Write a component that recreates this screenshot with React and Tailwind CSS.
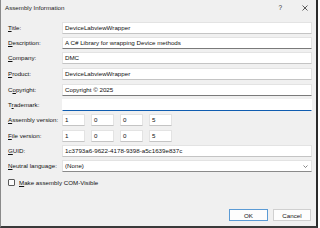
import React from "react";

const F = { fontFamily: '"Liberation Sans", Arial, sans-serif' };

function Label({ k, rest, pre = "" }) {
  return (
    <div className="w-[54px] shrink-0 text-[6.2px] leading-[12px] text-[#111] whitespace-nowrap">
      {pre}
      <span className="underline underline-offset-[1px]">{k}</span>
      {rest}
    </div>
  );
}

function Input({ value, bottom = "border-b-[#c4c4c4]", extra = "" }) {
  return (
    <div
      className={`h-[12px] w-[250px] bg-white border border-[#e3e3e3] ${bottom} ${extra} px-[2px] text-[6.2px] leading-[10px] text-[#111] whitespace-nowrap overflow-hidden`}
    >
      {value}
    </div>
  );
}

function Box({ v }) {
  return (
    <div className="h-[12px] w-[23px] bg-white border border-[#e3e3e3] border-b-[#c4c4c4] px-[2px] text-[6.2px] leading-[10px] text-[#111]">
      {v}
    </div>
  );
}

function Row({ mt, children }) {
  return <div className={`flex items-center ${mt}`}>{children}</div>;
}

export default function App() {
  return (
    <div className="w-[320px] h-[228px] bg-white overflow-hidden" style={F}>
      <div className="w-[318px] h-[228px] bg-[#f0f0f0] border-l border-l-[#8a8a8a] border-r-2 border-r-[#2b2b2b] border-b-2 border-b-[#3a3a3a] flex flex-col">
        {/* title bar */}
        <div className="h-[15px] flex items-center pl-[4px] text-[6.2px] text-[#1a1a1a]">
          <span>Assembly Information</span>
          <span className="ml-auto mr-[20px] text-[6.5px] text-[#333]">?</span>
          <svg width="6" height="6" viewBox="0 0 6 6" className="mr-[8px]">
            <path d="M0.5 0.5 L5.5 5.5 M5.5 0.5 L0.5 5.5" stroke="#333" strokeWidth="0.8" />
          </svg>
        </div>

        <div className="flex flex-col pl-[7px]">
          <Row mt="mt-[7px]">
            <Label k="T" rest="itle:" />
            <Input value="DeviceLabviewWrapper" />
          </Row>
          <Row mt="mt-[3px]">
            <Label k="D" rest="escription:" />
            <Input value="A C# Library for wrapping Device methods" bottom="border-b-[#7a7a7a]" />
          </Row>
          <Row mt="mt-[3px]">
            <Label k="C" rest="ompany:" />
            <Input value="DMC" />
          </Row>
          <Row mt="mt-[4px]">
            <Label k="P" rest="roduct:" />
            <Input value="DeviceLabviewWrapper" />
          </Row>
          <Row mt="mt-[4px]">
            <Label pre="C" k="o" rest="pyright:" />
            <Input value="Copyright © 2025" bottom="border-b-[#7a7a7a]" />
          </Row>
          <Row mt="mt-[3px]">
            <Label pre="T" k="r" rest="ademark:" />
            <Input value="" bottom="border-t-white border-x-white border-b-[1.5px] border-b-[#0f5cb0]" />
          </Row>
          <Row mt="mt-[3px]">
            <Label k="A" rest="ssembly version:" />
            <div className="flex gap-[6px]">
              <Box v="1" />
              <Box v="0" />
              <Box v="0" />
              <Box v="5" />
            </div>
          </Row>
          <Row mt="mt-[4px]">
            <Label k="F" rest="ile version:" />
            <div className="flex gap-[6px]">
              <Box v="1" />
              <Box v="0" />
              <Box v="0" />
              <Box v="5" />
            </div>
          </Row>
          <Row mt="mt-[3px]">
            <Label k="G" rest="UID:" />
            <Input value="1c3793a6-9622-4178-9398-a5c1639e837c" />
          </Row>
          <Row mt="mt-[3px]">
            <Label k="N" rest="eutral language:" />
            <div className="h-[12px] w-[250px] bg-white border border-[#e3e3e3] border-b-[#8a8a8a] pl-[2px] pr-[3px] flex items-center text-[6.2px] text-[#111]">
              <span>(None)</span>
              <svg width="5" height="3" viewBox="0 0 5 3" className="ml-auto">
                <path d="M0.5 0.5 L2.5 2.5 L4.5 0.5" stroke="#555" strokeWidth="0.7" fill="none" />
              </svg>
            </div>
          </Row>
          <div className="flex items-center mt-[6px] gap-[4px]">
            <div className="w-[7px] h-[7px] border border-[#5a5a5a] bg-[#fbfbfb] rounded-[1px]" />
            <span className="text-[6.2px] text-[#111]">
              <span className="underline underline-offset-[1px]">M</span>ake assembly COM-Visible
            </span>
          </div>
        </div>

        <div className="flex justify-end gap-[5px] pr-[5px] mt-[22px]">
          <div className="w-[39px] h-[12px] bg-[#fdfdfd] border border-[#5b9bd5] flex items-center justify-center text-[6.2px] text-[#111]">
            OK
          </div>
          <div className="w-[38px] h-[12px] bg-[#fdfdfd] border border-[#d0d0d0] flex items-center justify-center text-[6.2px] text-[#111]">
            Cancel
          </div>
        </div>
      </div>
    </div>
  );
}
